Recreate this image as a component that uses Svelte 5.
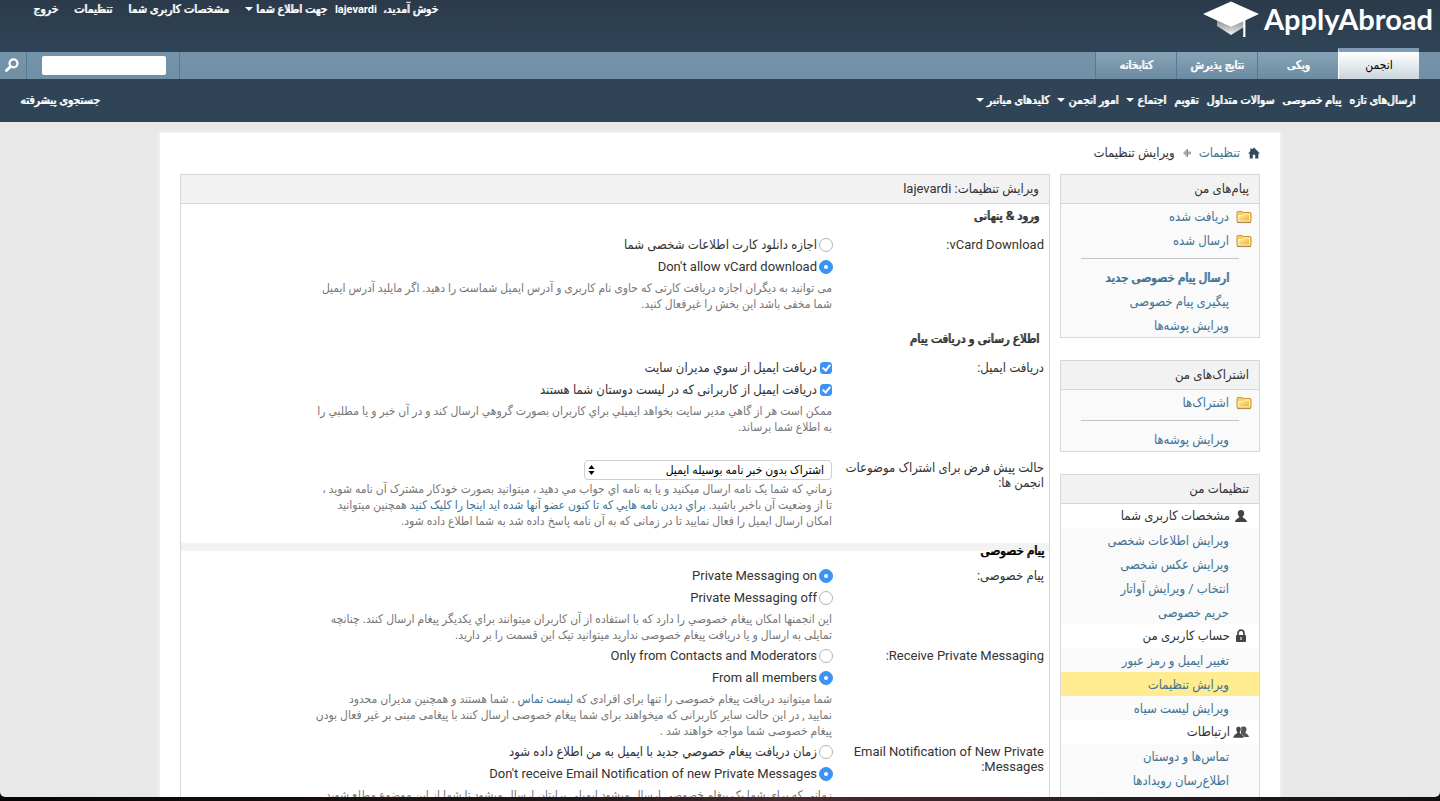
<script>
  const tabs = ['انجمن', 'ویکی', 'نتایج پذیرش', 'کتابخانه'];
  const links = [
    { text: 'ارسال‌های تازه' },
    { text: 'پیام خصوصی' },
    { text: 'سوالات متداول' },
    { text: 'تقویم' },
    { text: 'اجتماع', menu: true },
    { text: 'امور انجمن', menu: true },
    { text: 'کلیدهای میانبر', menu: true }
  ];
  const settings = [
    { icon: 'user', title: 'مشخصات کاربری شما', items: ['ویرایش اطلاعات شخصی', 'ویرایش عکس شخصی', 'انتخاب / ویرایش آواتار', 'حریم خصوصی'] },
    { icon: 'lock', title: 'حساب کاربری من', items: ['تغییر ایمیل و رمز عبور', 'ویرایش تنظیمات', 'ویرایش لیست سیاه'] },
    { icon: 'users', title: 'ارتباطات', items: ['تماس‌ها و دوستان', 'اطلاع‌رسان رویدادها'] }
  ];
  const current = 'ویرایش تنظیمات';
</script>

{#snippet folder()}
  <svg class="folder" width="16" height="14" viewBox="0 0 16 14" aria-hidden="true">
    <defs>
      <linearGradient id="fold" x1="0" y1="0" x2="1" y2="1">
        <stop offset="0" stop-color="#fff0a8" /><stop offset="1" stop-color="#f0ae2c" />
      </linearGradient>
    </defs>
    <path d="M1 2.500q0-1 1-1h4l1.500 1H14q1 0 1 1V11q0 1-1 1H2q-1 0-1-1z" fill="#f5cf62" stroke="#c99735" />
    <path d="M2.500 5.500h4l1.500-1.500h5.500V11h-11z" fill="url(#fold)" stroke="#fff3c0" />
    <path d="M1 12.600h14" stroke="#8f6a2a" stroke-opacity=".7" />
  </svg>
{/snippet}

{#snippet glyph(name)}
  <svg class="glyph" width="16" height="14" viewBox="0 0 16 14" aria-hidden="true" fill="#444">
    {#if name === 'lock'}
      <path d="M5 6V4.200a3 3 0 0 1 6 0V6" fill="none" stroke="#444" stroke-width="1.700" />
      <rect x="3" y="6" width="10" height="7" rx="1" />
      <path d="M7.300 8h1.400v3H7.300z" fill="#ddd" />
    {:else if name === 'user'}
      <path d="M8 1c2.200 0 3.200 1.400 3.200 3.200S9.800 7.300 9.600 8c0 1 3.900 1.500 4.400 5H2c.5-3.500 4.400-4 4.400-5C6.200 7.300 4.800 6 4.800 4.200S5.800 1 8 1z" />
    {:else}
      <path d="M11 1.500c1.700 0 2.500 1.200 2.500 2.800S12.500 7 12.400 7.600c0 1.300 3.200 1.400 3.600 4.400H8V2.500c.5-.6 1.500-1 3-1z" fill="#555" />
      <path d="M5.500 1.500C7.200 1.500 8 2.700 8 4.300S7 7 6.900 7.600c0 1.300 3.700 1.600 4.100 5.400H0c.4-3.800 4.100-4.100 4.100-5.400C4 7 3 5.900 3 4.300s.8-2.800 2.500-2.800z" stroke="#fff" stroke-width=".5" />
    {/if}
  </svg>
{/snippet}

{#snippet radio(group, text, checked)}
  <label class="option"><input type="radio" name={group} {checked} /><span>{text}</span></label>
{/snippet}

{#snippet check(text)}
  <label class="option"><input type="checkbox" checked /><span>{text}</span></label>
{/snippet}

<div class="screen" dir="rtl">
  <header class="top">
    <a class="logo" href="#home" dir="ltr">
      <svg width="56" height="38" viewBox="0 0 56 38" aria-hidden="true">
        <defs>
          <linearGradient id="cap" x1="0" y1="0" x2="0" y2="1">
            <stop offset="0" stop-color="#8b8b90" /><stop offset="1" stop-color="#f2f2f4" />
          </linearGradient>
        </defs>
        <path d="M14 20l14 7 13-7v7L28 35 14 26z" fill="url(#cap)" />
        <path d="M0 14L28 1.500 56 14 28 27z" fill="#fff" />
        <path d="M40.200 20h2.200v17h-2.200z" fill="#fff" />
      </svg>
      <span>ApplyAbroad</span>
    </a>
    <nav class="account strong">
      <span>خوش آمدید،&nbsp; <a class="name" href="#me">lajevardi</a></span>
      <a class="notify" href="#notifications">جهت اطلاع شما<i class="caret"></i></a>
      <a href="#profile">مشخصات کاربری شما</a>
      <a href="#settings">تنظیمات</a>
      <a href="#logout">خروج</a>
    </nav>
  </header>

  <div class="bar">
    <nav class="tabs">
      {#each tabs as tab, i}
        <a href="#tab" class:active={i === 0} class:strong={i > 0}>{tab}</a>
      {/each}
    </nav>
    <form class="search">
      <div class="field"><input type="text" aria-label="جستجو" /></div>
      <button type="button" aria-label="جستجو">
        <svg width="14" height="14" viewBox="0 0 14 14" fill="none" stroke="#fff">
          <circle cx="8.500" cy="5.300" r="4" stroke-width="2.200" /><path d="M5.500 8.500L1.500 12.500" stroke-width="2.800" stroke-linecap="round" />
        </svg>
      </button>
    </form>
  </div>

  <div class="sub strong">
    <nav>
      {#each links as link}
        <a href="#link">{link.text}{#if link.menu}<i class="caret"></i>{/if}</a>
      {/each}
    </nav>
    <a href="#advanced">جستجوی پیشرفته</a>
  </div>

  <div class="view">
    <div class="wrapper">
      <nav class="crumbs">
        <svg width="12" height="12" viewBox="0 0 13 12" fill="#35495c" aria-hidden="true">
          <path d="M6.500 0L13 6.500h-1.800V12H7.800V8H5.200v4H1.800V6.500H0L2.500 4V1h1.700v1.300z" />
        </svg>
        <a href="#settings">تنظیمات</a>
        <svg width="8" height="10" viewBox="0 0 8 10" aria-hidden="true">
          <path d="M0 5l4-4v2.500h4v3H4V9z" fill="#aaa" /><path d="M4.500 1v8" stroke="#888" />
        </svg>
        <span>ویرایش تنظیمات</span>
      </nav>

      <div class="columns">
        <aside>
          <section class="panel">
            <h2>پیام‌های من</h2>
            <ul>
              <li>{@render folder()}<a href="#inbox">دریافت شده</a></li>
              <li>{@render folder()}<a href="#sent">ارسال شده</a></li>
            </ul>
            <hr />
            <ul>
              <li><a class="strong" href="#new">ارسال پیام خصوصی جدید</a></li>
              <li><a href="#track">پیگیری پیام خصوصی</a></li>
              <li><a href="#folders">ویرایش پوشه‌ها</a></li>
            </ul>
          </section>
          <section class="panel">
            <h2>اشتراک‌های من</h2>
            <ul><li>{@render folder()}<a href="#subs">اشتراک‌ها</a></li></ul>
            <hr />
            <ul><li><a href="#subfolders">ویرایش پوشه‌ها</a></li></ul>
          </section>
          <section class="panel options">
            <h2>تنظیمات من</h2>
            {#each settings as group}
              <h3>{@render glyph(group.icon)}{group.title}</h3>
              <ul>
                {#each group.items as item}
                  <li class:current={item === current}><a href="#item">{item}</a></li>
                {/each}
              </ul>
            {/each}
          </section>
        </aside>

        <main>
          <h1>ویرایش تنظیمات: lajevardi</h1>
          <h4 class="strong">ورود &amp; پنهانی</h4>
          <div class="row">
            <div class="label">vCard Download:</div>
            <div class="control">
              {@render radio('vcard', 'اجازه دانلود کارت اطلاعات شخصی شما', false)}
              {@render radio('vcard', "Don't allow vCard download", true)}
              <p>می توانید به دیگران اجازه دریافت کارتی که حاوی نام کاربری و آدرس ایمیل شماست را دهید. اگر مایلید آدرس ایمیل<br />شما مخفی باشد این بخش را غیرفعال کنید.</p>
            </div>
          </div>

          <h4 class="strong spaced">اطلاع رسانی و دریافت پیام</h4>
          <div class="row">
            <div class="label">دریافت ایمیل:</div>
            <div class="control">
              {@render check('دریافت ایمیل از سوي مدیران سایت')}
              {@render check('دریافت ایمیل از کاربرانی که در لیست دوستان شما هستند')}
              <p>ممکن است هر از گاهي مدیر سایت بخواهد ایمیلي براي کاربران بصورت گروهي ارسال کند و در آن خبر و یا مطلبي را<br />به اطلاع شما برساند.</p>
            </div>
          </div>
          <div class="row subscribe">
            <label class="label" for="mode">حالت پیش فرض برای اشتراک موضوعات<br />انجمن ها:</label>
            <div class="control">
              <div class="select">
                <select id="mode"><option>اشتراک بدون خبر نامه بوسیله ایمیل</option></select>
                <svg width="7" height="10" viewBox="0 0 7 10" aria-hidden="true"><path d="M3.500 0L6.500 4h-6zM3.500 10L.5 6h6z" /></svg>
              </div>
              <p>زماني که شما یک نامه ارسال میکنید و یا به نامه اي جواب مي دهید ، میتوانید بصورت خودکار مشترک آن نامه شوید ،<br />تا از وضعیت آن باخبر باشید. <a href="#list">براي دیدن نامه هایي که تا کنون عضو آنها شده اید اینجا را کلیک کنید</a> همچنین میتوانید<br />امکان ارسال ایمیل را فعال نمایید تا در زمانی که به آن نامه پاسخ داده شد به شما اطلاع داده شود.</p>
            </div>
          </div>

          <h4 class="strong private">پیام خصوصی</h4>
          <div class="row">
            <div class="label">پیام خصوصی:</div>
            <div class="control">
              {@render radio('pm', 'Private Messaging on', true)}
              {@render radio('pm', 'Private Messaging off', false)}
              <p>این انجمنها امکان پیغام خصوصي را دارد که با استفاده از آن کاربران میتوانند براي یکدیگر پیغام ارسال کنند. چنانچه<br />تمایلی به ارسال و یا دریافت پیغام خصوصی ندارید میتوانید تیک این قسمت را بر دارید.</p>
            </div>
          </div>
          <div class="row">
            <div class="label">Receive Private Messaging:</div>
            <div class="control">
              {@render radio('from', 'Only from Contacts and Moderators', false)}
              {@render radio('from', 'From all members', true)}
              <p>شما میتوانید دریافت پیغام خصوصی را تنها برای افرادی که <a href="#contacts">لیست تماس</a> . شما هستند و همچنین مدیران محدود<br />نمایید , در این حالت سایر کاربرانی که میخواهند برای شما پیغام خصوصی ارسال کنند با پیغامی مبنی بر غیر فعال بودن<br />پیغام خصوصی شما مواجه خواهند شد .</p>
            </div>
          </div>
          <div class="row">
            <div class="label">Email Notification of New Private<br />Messages:</div>
            <div class="control">
              {@render radio('mail', 'زمان دریافت پیغام خصوصي جدید با ایمیل به من اطلاع داده شود', false)}
              {@render radio('mail', "Don't receive Email Notification of new Private Messages", true)}
              <p>زمانی که برای شما یک پیغام خصوصی ارسال میشود ایمیلی برایتان ارسال میشود تا شما از این موضوع مطلع شوید</p>
            </div>
          </div>
        </main>
      </div>
    </div>
  </div>
</div>

<style>
  :global(body) { margin: 0; background: #0b0708; }
  .screen {
    height: 100vh;
    display: flex;
    flex-direction: column;
    overflow: hidden;
    padding-bottom: 4px;
    box-sizing: border-box;
    background: linear-gradient(90deg, #060404, #1c0f10 25%, #22181a 40%, #4a2a30 55%, #2a2024 75%, #150d10);
    font: 13px/24px Roboto, "DejaVu Sans Condensed", "DejaVu Sans", sans-serif;
    color: #333;
  }
  a { color: #417394; text-decoration: none; }
  ul, h1, h2, h3, h4, p { margin: 0; padding: 0; font-size: inherit; font-weight: normal; }
  ul { list-style: none; }
  .strong, .strong a { text-shadow: 1px 0 0 currentColor; }
  .top {
    height: 52px;
    flex: none;
    display: flex;
    justify-content: space-between;
    align-items: flex-start;
    padding: 0 7px 0 33px;
    background: linear-gradient(#2b3a4a, #2f4557);
  }
  .logo { display: flex; gap: 5px; color: #fff; }
  .logo span { font: 700 29px/38px Lato, sans-serif; }
  .account { display: flex; gap: 16px; font-size: 12px; line-height: 18px; color: #fff; white-space: nowrap; }
  .account a, .sub a { color: #fff; }
  .account .name { font-size: 11px; font-weight: 700; text-shadow: none; }
  .account .notify { margin-right: -8px; }
  .caret {
    display: inline-block;
    border: 4px solid transparent;
    border-top-color: #fff;
    border-bottom: 0;
    margin-right: 3px;
    vertical-align: 2px;
  }
  .bar { height: 27px; flex: none; display: flex; justify-content: space-between; background: linear-gradient(#7593a9, #7190a6); }
  .tabs { display: flex; padding-right: 21px; font-size: 12px; }
  .tabs a {
    width: 80px;
    line-height: 27px;
    text-align: center;
    color: #fff;
    background: linear-gradient(#88a3b6, #6c8ba1);
    border-left: 1px solid #557b94;
  }
  .tabs .active {
    margin-top: -4px;
    border-top: 4px solid #7e9ab5;
    border-left-color: #fff;
    color: #000;
    background: linear-gradient(#fff, #ccd6de);
  }
  .search { display: flex; }
  .field { display: flex; align-items: center; padding: 0 13px 0 15px; border-right: 1px solid #557b94; border-left: 1px solid #557b94; }
  .field input { width: 124px; height: 19px; box-sizing: border-box; border: 0; border-radius: 2px; background: #fff; }
  .search button { width: 26px; padding: 0 3px 2px 0; border: 0; background: none; display: flex; align-items: center; justify-content: center; }
  .sub {
    height: 43px;
    flex: none;
    display: flex;
    justify-content: space-between;
    padding: 0 25px 0 20px;
    background: #2f4557;
    font-size: 12px;
    line-height: 43px;
  }
  .sub nav { display: flex; gap: 8px; }
  .view { flex: 1; min-height: 0; overflow: hidden; background: #e8e8e8; border-radius: 0 0 5px 5px; }
  .wrapper { margin: 11px 160px 0; padding: 8px 20px 20px; background: #fff; box-shadow: 0 0 4px #fff; }
  .crumbs { display: flex; align-items: center; gap: 8px; height: 24px; margin-bottom: 9px; }
  .columns { display: flex; gap: 10px; align-items: flex-start; }
  aside { width: 200px; flex: none; display: flex; flex-direction: column; gap: 22px; }
  .panel { border: 1px solid #d7d7d7; background: #fafafa; }
  .options { padding-bottom: 24px; }
  h2, h1 { height: 28px; line-height: 27px; padding: 0 10px; background: #f2f2f2; border-bottom: 1px solid #d7d7d7; }
  li, h3 { display: flex; align-items: center; height: 24px; box-sizing: border-box; }
  li { padding: 2px 30px 0 0; }
  li:has(.folder) { padding-right: 7px; gap: 7px; }
  h3 { padding-right: 10px; gap: 3px; background: #fff; }
  .current { background: #ffeb90; }
  hr { height: 1px; margin: 6px 20px; border: 0; background: #c4c4c4; }
  main { flex: 1; min-width: 0; border: 1px solid #d7d7d7; }
  h4 { padding-right: 10px; margin-bottom: 6px; }
  .spaced { margin-top: 13px; }
  .private { margin: 12px 0 0; padding-right: 5px; color: #000; background: linear-gradient(#f2f2f2, #f2f2f2) top / 100% 8px no-repeat; line-height: 16px; height: 22px; }
  .row { display: flex; padding-right: 5px; }
  .label { width: 208px; flex: none; padding-top: 3px; line-height: 15px; white-space: nowrap; }
  .control { padding: 0 4px 2px 0; white-space: nowrap; }
  .option { display: flex; align-items: center; gap: 2px; height: 22px; }
  .option input {
    appearance: none;
    display: flex;
    align-items: center;
    justify-content: center;
    width: 14px;
    height: 14px;
    margin: 0 -1px 0 0;
    border: 1px solid #b4b4b4;
    border-radius: 7px;
    background: #fff;
  }
  .option input:checked { border-color: #3b93f5; background: #3b93f5; }
  .option input:checked::after { content: ''; width: 4px; height: 4px; border-radius: 2px; background: #fff; }
  .option input[type='checkbox'] { width: 12px; height: 12px; margin: 0 0 0 1px; border-radius: 3px; }
  .option input[type='checkbox']::after { width: 3px; height: 6px; margin-top: -2px; border-radius: 0; border: solid #fff; border-width: 0 2px 2px 0; background: none; transform: rotate(40deg); }
  p { padding-top: 2px; font-size: 12px; line-height: 16px; color: #777; }
  .subscribe { margin-top: 20px; }
  .subscribe .control { padding-top: 3px; }
  .subscribe p { padding-top: 1px; }
  .select { position: relative; width: 248px; }
  .select select {
    display: block;
    appearance: none;
    width: 100%;
    height: 20px;
    padding: 0 7px;
    border: 1px solid #d0d0d0;
    border-radius: 4px;
    background: #fff;
    color: #000;
    font: 12px/18px Roboto, "DejaVu Sans Condensed", "DejaVu Sans", sans-serif;
  }
  .select svg { position: absolute; left: 4px; top: 5px; }
</style>
